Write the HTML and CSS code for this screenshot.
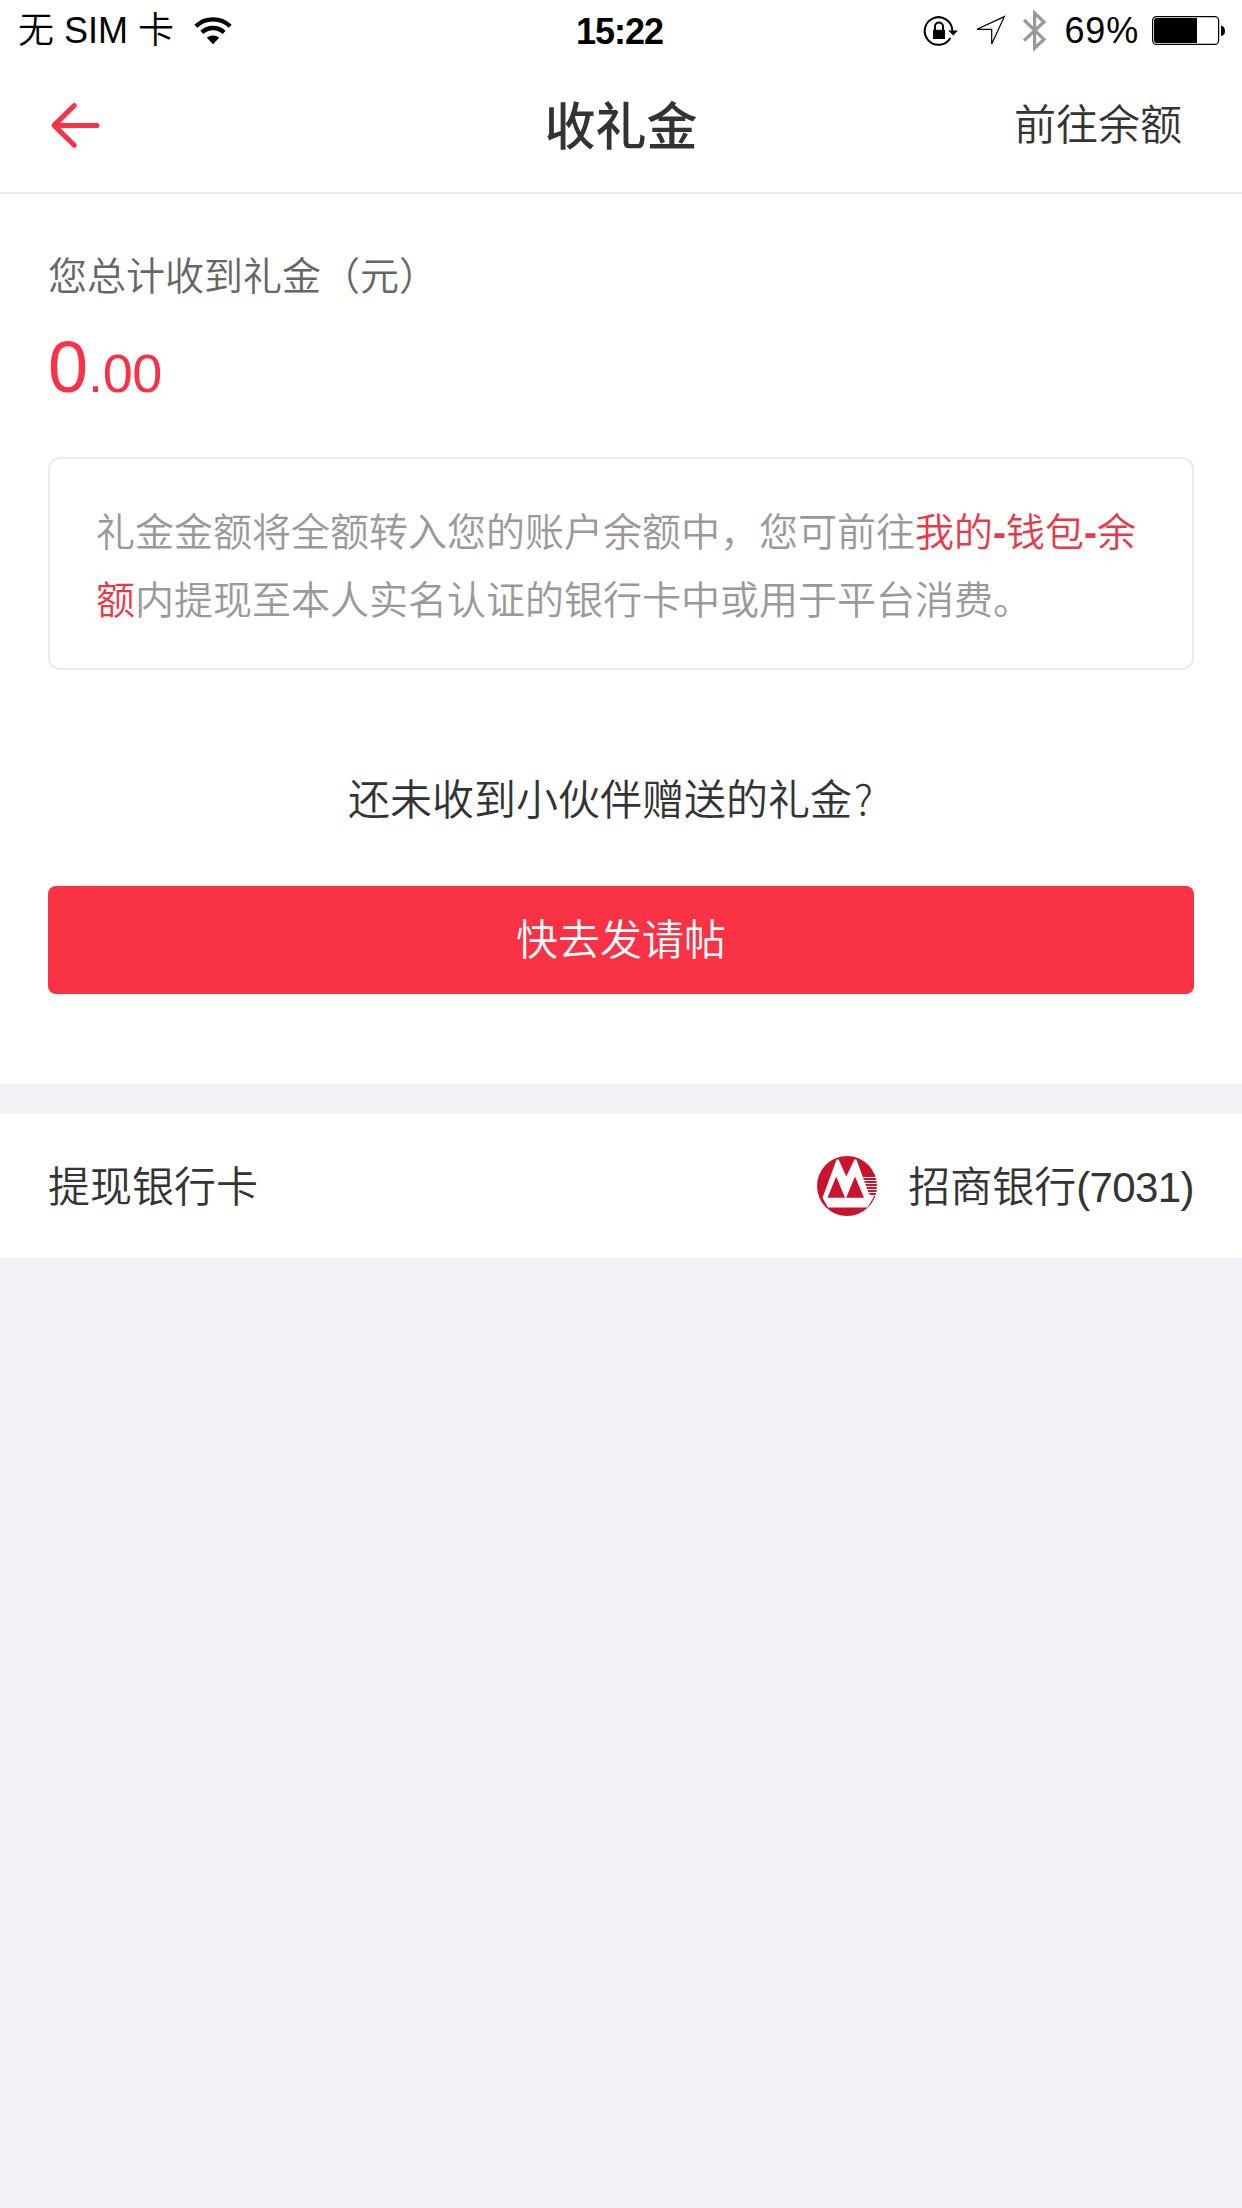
FILE: index.html
```html
<!DOCTYPE html>
<html lang="zh-CN">
<head>
<meta charset="utf-8">
<title>收礼金</title>
<link rel="stylesheet" href="styles.css">
</head>
<body>
<header class="top">
  <div class="status">
    <div class="status-left">
      <span class="carrier">无 SIM 卡</span>
      <svg class="wifi" width="38" height="28" viewBox="0 0 38 28" fill="none" stroke="#000">
        <path d="M1.8 9.2A25 25 0 0 1 36.2 9.2" stroke-width="4.3"/>
        <path d="M7.8 15.4A16.5 16.5 0 0 1 30.2 15.4" stroke-width="4.3"/>
        <path d="M12.8 20.7A9.5 9.5 0 0 1 25.2 20.7L19 27.2Z" fill="#000" stroke="none"/>
      </svg>
    </div>
    <span class="clock">15:22</span>
    <div class="status-right">
      <svg width="36" height="32" viewBox="922 14 36 32">
        <path d="M949.4 37A13.8 13.8 0 1 1 951.3 29.8" fill="none" stroke="#000" stroke-width="2"/>
        <path d="M947.3 29.4H957L952.2 34.4Z"/>
        <path d="M932 28.8H944V38H932Z"/>
        <path d="M934 29V25.5A4 4 0 0 1 942 25.5V29" fill="none" stroke="#000" stroke-width="2"/>
      </svg>
      <svg class="locate" width="32" height="32" viewBox="975 14 32 32">
        <path d="M977 28.3L1004.4 15.6L991.7 43V28.3Z" fill="none" stroke="#000" stroke-width="1.2"/>
      </svg>
      <svg class="bluetooth" width="24" height="42" viewBox="1023 10 24 42" fill="none" stroke="#999" stroke-width="3.2">
        <path d="M1024 20L1044 39.4L1034.6 48V13L1044 22L1024 40.6"/>
      </svg>
      <span class="percent">69%</span>
      <svg class="battery" width="74" height="30" viewBox="1152 16 74 30">
        <rect x="1152.6" y="16.6" width="66" height="27.8" rx="4" fill="none" stroke="#000" stroke-width="1.2"/>
        <path d="M1156.5 18H1197V43H1156.5Q1154 43 1154 40.5V20.5Q1154 18 1156.5 18Z"/>
        <path d="M1221 25.5Q1225 26.5 1225 31T1221 36Z"/>
      </svg>
    </div>
  </div>
  <nav class="nav">
    <svg class="back" width="56" height="50" viewBox="48.5 100 56 50" fill="none" stroke="#f93248" stroke-width="5" stroke-linecap="round" stroke-linejoin="round">
      <path d="M74.8 105.5L54.5 125.4L74.8 145.2M55 125.4H97.5"/>
    </svg>
    <h1 class="title">收礼金</h1>
    <a class="nav-link">前往余额</a>
  </nav>
</header>
<main>
  <section class="summary">
    <p class="label">您总计收到礼金（元）</p>
    <p class="amount">0<span class="cents">.00</span></p>
    <div class="notice">礼金金额将全额转入您的账户余额中，您可前往<span class="path">我的<b>-</b>钱包<b>-</b>余额</span>内提现至本人实名认证的银行卡中或用于平台消费。</div>
    <p class="question">还未收到小伙伴赠送的礼金<span class="mark">?</span></p>
    <button class="send">快去发请帖</button>
  </section>
  <section class="card-row">
    <span class="row-text">提现银行卡</span>
    <div class="bank">
      <svg width="60" height="60" viewBox="0 0 60 60">
        <circle cx="30" cy="30" r="30" fill="#c8152d"/>
        <path d="M5.5 41.7L19.6 3.5H21.6L29.3 20.5L37.4 3.5H39.4L52 38L57 40.5L50.5 51.5H11Z" fill="#fff"/>
        <path d="M10.5 41.7L19.2 20.5L28 41.7ZM29.2 41.7L38 20.5L47 41.7Z" fill="#c8152d"/>
        <path d="M45 21.5H60M46 24.5H60M47 27.5H60M48 30.5H60M49 33.5H60M50 36.5H60M51 39.5H60" stroke="#fff" stroke-width="1.2"/>
      </svg>
      <span class="row-text">招商银行<span class="digits">(7031)</span></span>
    </div>
  </section>
</main>
</body>
</html>
```
FILE: styles.css
```css
* { box-sizing: border-box; margin: 0; padding: 0; }

body {
  min-height: 2208px;
  background: #f0f2f6;
  color: #333;
  font-family: "Liberation Sans", "Noto Sans CJK SC", sans-serif;
  font-weight: 350;
}

svg { display: block; flex: none; }

.top { height: 194px; background: #fff; border-bottom: 2px solid #e8e8e8; }

.status {
  display: grid;
  grid-template-columns: 1fr auto 1fr;
  height: 62px;
  padding: 0 16px 0 18px;
  color: #000;
  font-size: 36px;
  line-height: 64px;
}
.status-left, .status-right { display: flex; align-items: center; height: 62px; }
.status-left { gap: 20px; }
.status-right { justify-content: flex-end; }
.clock { margin-right: 5px; font-weight: 700; letter-spacing: -1px; }
.locate { margin-left: 16px; }
.bluetooth { margin-left: 16px; }
.percent { margin-left: 18px; letter-spacing: 0.8px; }
.battery { margin-left: 13px; }

.nav {
  display: grid;
  grid-template-columns: 1fr auto 1fr;
  align-items: center;
  height: 126px;
  padding: 0 48px;
}
.title { padding-top: 5px; font-size: 51px; font-weight: 500; line-height: 76px; }
.nav-link { justify-self: end; margin-right: 12px; padding-top: 2px; font-size: 42px; line-height: 62px; }

.summary { height: 890px; padding: 54px 48px 0; background: #fff; }
.label { color: #666; font-size: 39px; line-height: 58px; }
.amount { margin-top: 15px; color: #f93248; font-size: 72px; line-height: 92px; }
.cents { font-size: 54px; letter-spacing: -0.4px; }

.notice {
  height: 213px;
  margin-top: 38px;
  padding: 40px 46px;
  border: 2px solid #ebebeb;
  border-radius: 12px;
  color: #999;
  font-size: 39px;
  line-height: 67.5px;
}
.path { color: #e63a4b; }
.path b { line-height: 1; }

.question { margin-top: 100px; font-size: 42px; line-height: 62px; text-align: center; }
.mark { display: inline-block; width: 1em; padding-left: 2px; font-family: "Noto Sans CJK SC", sans-serif; font-weight: 300; line-height: 1; text-align: left; }

.send {
  display: block;
  width: 100%;
  height: 108px;
  margin-top: 54px;
  padding-bottom: 8px;
  border: 0;
  border-radius: 8px;
  background: #fa3246;
  color: #fff;
  font: inherit;
  font-size: 42px;
}

.card-row {
  display: flex;
  align-items: center;
  justify-content: space-between;
  height: 144px;
  margin-top: 30px;
  padding: 0 48px;
  background: #fff;
  font-size: 42px;
}
.row-text { padding-bottom: 6px; }
.bank { display: flex; align-items: center; gap: 31px; }
.digits { letter-spacing: -0.6px; }
```
